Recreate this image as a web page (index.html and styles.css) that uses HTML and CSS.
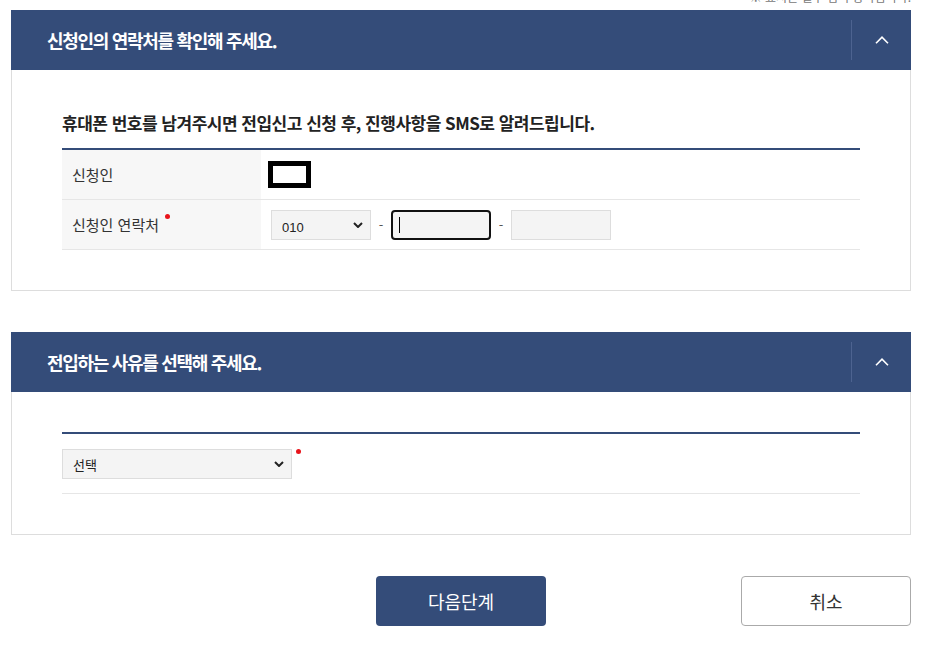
FILE: index.html
```html
<!DOCTYPE html>
<html lang="ko">
<head>
  <meta charset="UTF-8" />
  <meta name="viewport" content="width=device-width, initial-scale=1.0"/>
  <title>전입신고</title>
  <link rel="stylesheet" href="styles.css">
</head>
<body>

<div class="wrap">
  <p class="notice">※ 표시는 필수 입력 항목입니다.</p>

  <!-- 신청인 연락처 -->
  <section class="panel">
    <div class="panel-head">
      <h2>신청인의 연락처를 확인해 주세요.</h2>
      <button class="toggle" type="button" aria-label="접기">
        <svg width="14" height="8" viewBox="0 0 14 8"><path d="M1 7.2 L7 1.2 L13 7.2" fill="none" stroke="#fff" stroke-width="1.6"/></svg>
      </button>
    </div>
    <div class="panel-body">
      <h3 class="sub-title">휴대폰 번호를 남겨주시면 전입신고 신청 후, 진행사항을 SMS로 알려드립니다.</h3>
      <div class="form-table">
        <div class="form-row">
          <div class="form-label">신청인</div>
          <div class="form-value"><span class="masked"></span></div>
        </div>
        <div class="form-row">
          <div class="form-label">신청인 연락처<span class="req"></span></div>
          <div class="form-value">
            <select class="sel sel-tel">
              <option>010</option>
              <option>011</option>
              <option>016</option>
            </select>
            <span class="dash">-</span>
            <input type="text" class="inp inp-focus" />
            <span class="dash">-</span>
            <input type="text" class="inp" />
          </div>
        </div>
      </div>
    </div>
  </section>

  <!-- 전입 사유 -->
  <section class="panel">
    <div class="panel-head">
      <h2>전입하는 사유를 선택해 주세요.</h2>
      <button class="toggle" type="button" aria-label="접기">
        <svg width="14" height="8" viewBox="0 0 14 8"><path d="M1 7.2 L7 1.2 L13 7.2" fill="none" stroke="#fff" stroke-width="1.6"/></svg>
      </button>
    </div>
    <div class="panel-body">
      <div class="form-table">
        <div class="form-row form-row-wide">
          <select class="sel sel-reason">
            <option>선택</option>
            <option>직업</option>
            <option>가족</option>
            <option>주택</option>
          </select>
          <span class="req req-side"></span>
        </div>
      </div>
    </div>
  </section>

  <div class="btn-area">
    <button type="button" class="btn btn-primary">다음단계</button>
    <button type="button" class="btn btn-cancel">취소</button>
  </div>
</div>

</body>
</html>
```

FILE: styles.css
```css
body {
  margin: 0;
  padding: 0;
  background: #fff;
  font-family: "Noto Sans CJK KR", "Noto Sans", sans-serif;
  color: #333;
}
.wrap {
  width: 900px;
  margin-left: 11px;
}
.notice {
  margin: -10px 0 0;
  height: 14px;
  line-height: 14px;
  font-size: 12px;
  color: #777;
  text-align: right;
}
.panel {
  margin-top: 6px;
}
.panel + .panel {
  margin-top: 41px;
}
.panel-head {
  display: flex;
  align-items: center;
  height: 60px;
  background: #344c79;
}
.panel-head h2 {
  flex: 1;
  margin: 0;
  padding-left: 36px;
  font-size: 18px;
  font-weight: 700;
  letter-spacing: -1.3px;
  color: #fff;
}
.toggle {
  display: flex;
  align-items: center;
  justify-content: center;
  width: 60px;
  height: 40px;
  padding: 0;
  border: none;
  border-left: 1px solid #4d6390;
  background: none;
  cursor: pointer;
}
.panel-body {
  padding: 40px 50px 40px 50px;
  border: 1px solid #ddd;
  border-top: none;
}
.sub-title {
  margin: 0 0 12px;
  line-height: 26px;
  font-size: 17px;
  font-weight: 700;
  letter-spacing: -0.5px;
  color: #222;
}
.form-table {
  border-top: 2px solid #344c79;
}
.form-row {
  display: flex;
  height: 49px;
  border-bottom: 1px solid #e6e6e6;
}
.form-label {
  display: flex;
  align-items: center;
  width: 189px;
  padding-left: 10px;
  background: #f7f7f7;
  font-size: 15px;
  color: #333;
}
.form-value {
  display: flex;
  align-items: center;
  padding-left: 10px;
}
.masked {
  display: inline-block;
  width: 33px;
  height: 17px;
  margin-left: -3px;
  border: 5px solid #000;
}
.req {
  display: inline-block;
  width: 5px;
  height: 5px;
  margin: -16px 0 0 6px;
  border-radius: 50%;
  background: #e8141b;
}
.sel {
  height: 30px;
  padding: 0 24px 0 10px;
  border: 1px solid #ddd;
  background: #f4f4f4 url("data:image/svg+xml,%3Csvg xmlns='http://www.w3.org/2000/svg' width='10' height='6' viewBox='0 0 10 6'%3E%3Cpath d='M1 1 L5 5 L9 1' fill='none' stroke='%23222' stroke-width='2'/%3E%3C/svg%3E") no-repeat right 7px center;
  font-family: "Liberation Sans", "Noto Sans CJK KR", sans-serif;
  font-size: 13px;
  line-height: 30px;
  color: #222;
  appearance: none;
  -webkit-appearance: none;
}
.sel-tel {
  width: 100px;
  padding-top: 2px;
}
.dash {
  width: 20px;
  text-align: center;
  font-size: 13px;
  color: #555;
}
.inp {
  box-sizing: border-box;
  width: 100px;
  height: 30px;
  padding: 0 8px;
  border: 1px solid #ddd;
  background: #f4f4f4;
}
.inp-focus {
  border: 2px solid #111;
  border-radius: 4px;
  background: linear-gradient(#000, #000) no-repeat 6px 50% / 1px 16px, #f4f4f4;
}
.form-row-wide {
  align-items: center;
  height: 59px;
}
.sel-reason {
  width: 230px;
  font-family: "Noto Sans CJK KR", sans-serif;
}
.req-side {
  align-self: flex-start;
  margin: 15px 0 0 4px;
}
.btn-area {
  display: grid;
  grid-template-columns: 1fr auto 1fr;
  margin-top: 41px;
}
.btn {
  width: 170px;
  height: 50px;
  border-radius: 4px;
  font-family: "Noto Sans CJK KR", sans-serif;
  font-size: 18px;
  cursor: pointer;
}
.btn-primary {
  grid-column: 2;
  border: none;
  background: #344c79;
  color: #fff;
}
.btn-cancel {
  grid-column: 3;
  justify-self: end;
  border: 1px solid #aaa;
  background: #fff;
  color: #333;
}
```
